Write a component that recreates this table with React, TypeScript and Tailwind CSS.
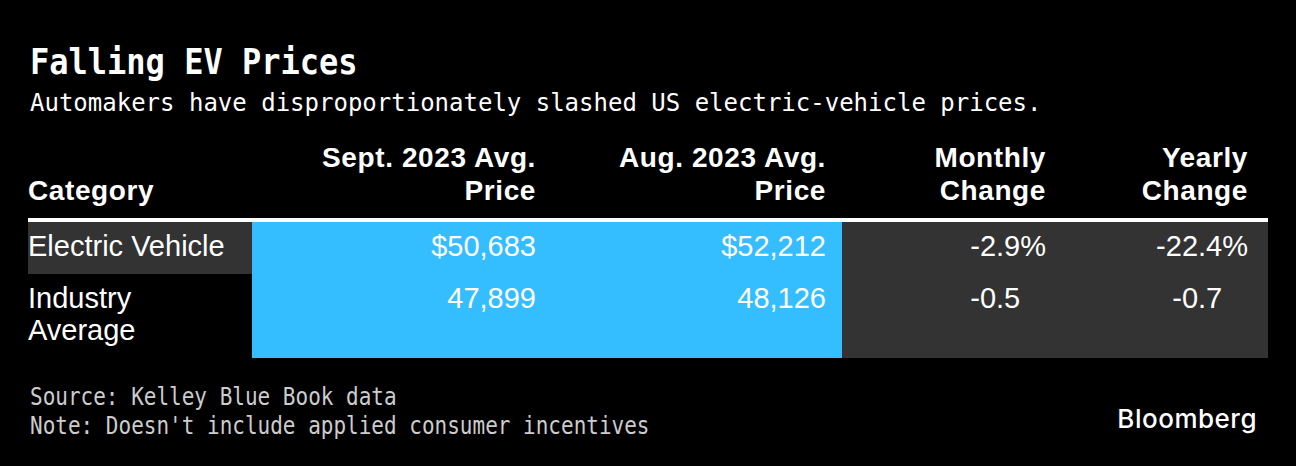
const mono = { fontFamily: '"DejaVu Sans Mono", monospace' };

const rows = [
  {
    category: "Electric Vehicle",
    sept: "$50,683",
    aug: "$52,212",
    monthly: "-2.9",
    yearly: "-22.4",
    pct: true,
    dark: true,
  },
  {
    category: "Industry\nAverage",
    sept: "47,899",
    aug: "48,126",
    monthly: "-0.5",
    yearly: "-0.7",
    pct: false,
    dark: false,
  },
];

// keeps the decimal points lined up when a row has no percent sign
function Pct({ show }: { show: boolean }) {
  return <span className={show ? "" : "invisible"}>%</span>;
}

export default function App() {
  return (
    <div className="w-[1296px] h-[466px] bg-black text-white overflow-hidden">
      <div className="px-[30px] pt-[43px]" style={mono}>
        <h1 className="text-[32px] leading-[38px] font-bold scale-y-[1.12]">Falling EV Prices</h1>
        <p className="mt-[7px] text-[24px] leading-[30px]">
          Automakers have disproportionately slashed US electric-vehicle prices.
        </p>
      </div>

      <div
        className="mt-[23px] ml-[28px] w-[1240px]"
        style={{ fontFamily: '"Liberation Sans", Arial, sans-serif' }}
      >
        <div className="grid grid-cols-[224px_300px_290px_224px_202px] text-[28px] leading-[33px] font-bold tracking-[0.6px] pb-[11px] border-b-4 border-white">
          <div className="flex items-end">Category</div>
          <div className="text-right pr-4">
            Sept. 2023 Avg.
            <br />
            Price
          </div>
          <div className="text-right pr-4">
            Aug. 2023 Avg.
            <br />
            Price
          </div>
          <div className="text-right pr-5">
            Monthly
            <br />
            Change
          </div>
          <div className="text-right pr-5">
            Yearly
            <br />
            Change
          </div>
        </div>

        {rows.map((r) => (
          <div
            key={r.category}
            className="grid grid-cols-[224px_300px_290px_224px_202px] text-[29px] leading-[32px]"
          >
            <div className={`pt-2 pb-3 whitespace-pre-line ${r.dark ? "bg-[#333333]" : "bg-black"}`}>
              {r.category}
            </div>
            <div className="pt-2 pb-3 pr-4 text-right bg-[#34bdff]">{r.sept}</div>
            <div className="pt-2 pb-3 pr-4 text-right bg-[#34bdff]">{r.aug}</div>
            <div className="pt-2 pb-3 pr-5 text-right bg-[#333333]">
              {r.monthly}
              <Pct show={r.pct} />
            </div>
            <div className="pt-2 pb-3 pr-5 text-right bg-[#333333]">
              {r.yearly}
              <Pct show={r.pct} />
            </div>
          </div>
        ))}
      </div>

      <div className="flex items-end justify-between pl-[30px] pr-[39px] mt-[30px]">
        <div className="text-[21px] leading-[23.5px] text-[#cccccc] scale-y-[1.22]" style={mono}>
          <div>Source: Kelley Blue Book data</div>
          <div>Note: Doesn't include applied consumer incentives</div>
        </div>
        <div
          className="text-[26px] leading-[30px] font-medium tracking-[0.5px] mb-[1px]"
          style={{ fontFamily: "Inter, sans-serif" }}
        >
          Bloomberg
        </div>
      </div>
    </div>
  );
}
